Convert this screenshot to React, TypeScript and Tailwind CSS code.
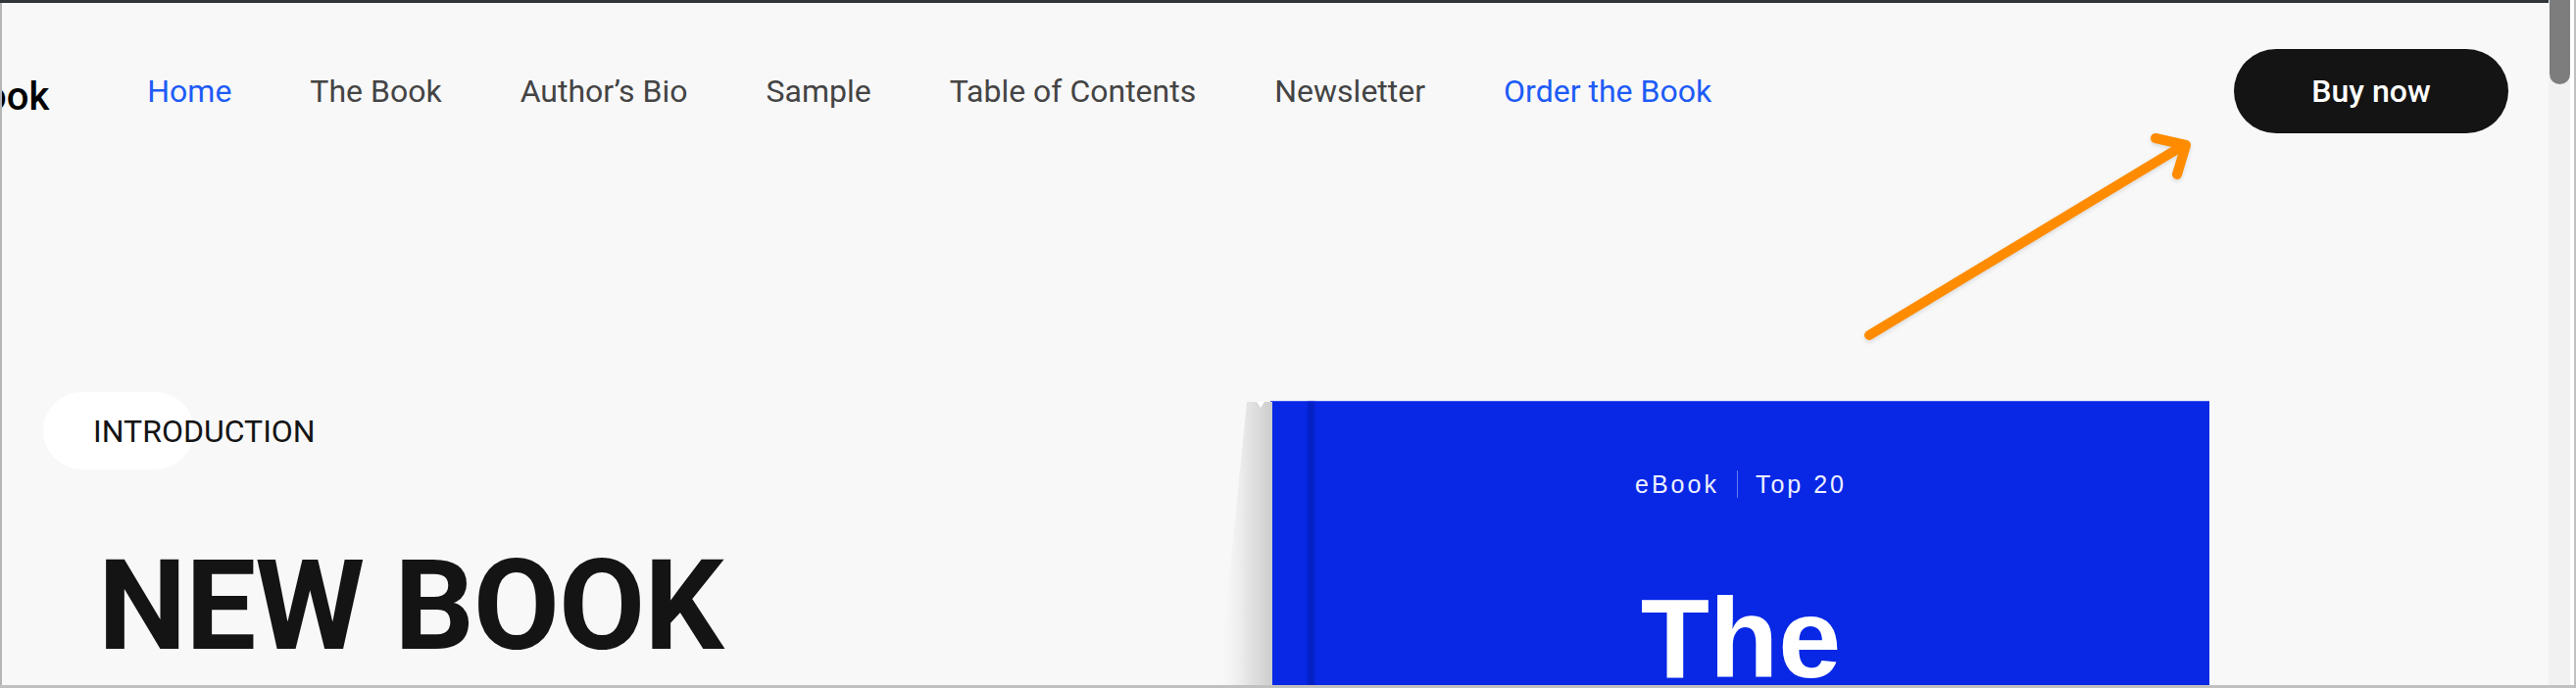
const navLinks = [
  { label: 'Home', active: true },
  { label: 'The Book', active: false },
  { label: 'Author’s Bio', active: false },
  { label: 'Sample', active: false },
  { label: 'Table of Contents', active: false },
  { label: 'Newsletter', active: false },
  { label: 'Order the Book', active: true },
]

const BookShadow = () => (
  <svg className="absolute right-full top-0" width="60" height="300" viewBox="0 0 60 300">
    <defs>
      <linearGradient id="bookShade" x1="0" y1="0" x2="1" y2="0">
        <stop offset="0" stopColor="#f8f8f8" stopOpacity="0" />
        <stop offset="0.55" stopColor="#e4e4e4" />
        <stop offset="1" stopColor="#cdcdcd" />
      </linearGradient>
    </defs>
    <polygon points="34,0 60,0 60,300 4,300" fill="url(#bookShade)" />
    <polygon points="44,0 52,0 48,6" fill="#ffffff" />
  </svg>
)

const Arrow = () => (
  <svg
    className="absolute left-[1890px] top-[130px] drop-shadow-[0_2px_2px_rgba(0,0,0,0.12)]"
    width="360"
    height="230"
    viewBox="0 0 360 230"
    fill="none"
    stroke="#ff8c00"
    strokeWidth="10"
    strokeLinecap="round"
    strokeLinejoin="round"
  >
    <path d="M17 212 L338 18" />
    <path d="M309 11 L340 18 L331 48" />
  </svg>
)

export default function App() {
  return (
    <div className="relative flex h-[702px] w-[2628px] overflow-hidden border-b-[3px] border-r-2 border-[#c0c0c0] font-['Roboto',sans-serif]">
      {/* page */}
      <div className="flex min-w-0 flex-1 flex-col border-t-[3px] border-[#30363a]">
        <div className="flex min-h-0 flex-1 flex-col overflow-hidden border-l-2 border-[#b5b5b5] bg-[#f8f8f8]">
          {/* Header */}
          <header className="flex h-[180px] shrink-0 items-center pr-[41px]">
            <span className="-ml-[18px] mt-[12px] text-[40px] font-medium leading-none text-black">ook</span>
            <nav className="ml-[100px] flex items-center gap-[80px]">
              {navLinks.map((link) => (
                <a
                  key={link.label}
                  className={`whitespace-nowrap text-[32px] leading-none ${
                    link.active ? 'text-[#1d5bf6]' : 'text-[#444444]'
                  }`}
                >
                  {link.label}
                </a>
              ))}
            </nav>
            <button className="ml-auto flex h-[86px] w-[280px] items-center justify-center rounded-full bg-[#141414] text-[32px] font-medium text-white">
              Buy now
            </button>
          </header>

          {/* Hero */}
          <section className="flex flex-1">
            <div className="flex-1 pl-[42px] pt-[217px]">
              <div className="flex h-[79px] w-[154px] items-center rounded-full bg-white pl-[51px]">
                <span className="whitespace-nowrap text-[32px] leading-none text-[#141414]">INTRODUCTION</span>
              </div>
              <h1 className="ml-[56px] mt-[75px] whitespace-nowrap text-[128px] font-bold leading-none tracking-[-1px] text-[#141414]">
                NEW BOOK
              </h1>
            </div>

            <div className="relative mr-[346px] mt-[226px] w-[958px] border-l-2 border-t border-[#3b55f0] bg-[#0828e6]">
              <BookShadow />
              <div className="absolute bottom-0 left-[36px] top-0 w-[7px] bg-[#0520c2] blur-[1px]" />
              <div className="flex flex-col items-center font-['Liberation_Sans',Arial,sans-serif] text-white">
                <div className="mt-[70px] flex items-center gap-[18px] text-[25px] leading-none tracking-[3px] text-[#eef0ff]">
                  <span>eBook</span>
                  <span className="h-[28px] w-px bg-white/40" />
                  <span>Top 20</span>
                </div>
                <div className="mt-[86px] text-[115px] font-bold leading-none">The</div>
              </div>
            </div>
          </section>
        </div>
      </div>

      {/* scrollbar */}
      <div className="w-[22px] shrink-0 bg-[#f1f1f1]">
        <div className="ml-px h-[86px] w-[21px] rounded-b-[11px] bg-[#7d7d7d]" />
      </div>
      <div className="w-[4px] shrink-0 bg-white" />

      <Arrow />
    </div>
  )
}
